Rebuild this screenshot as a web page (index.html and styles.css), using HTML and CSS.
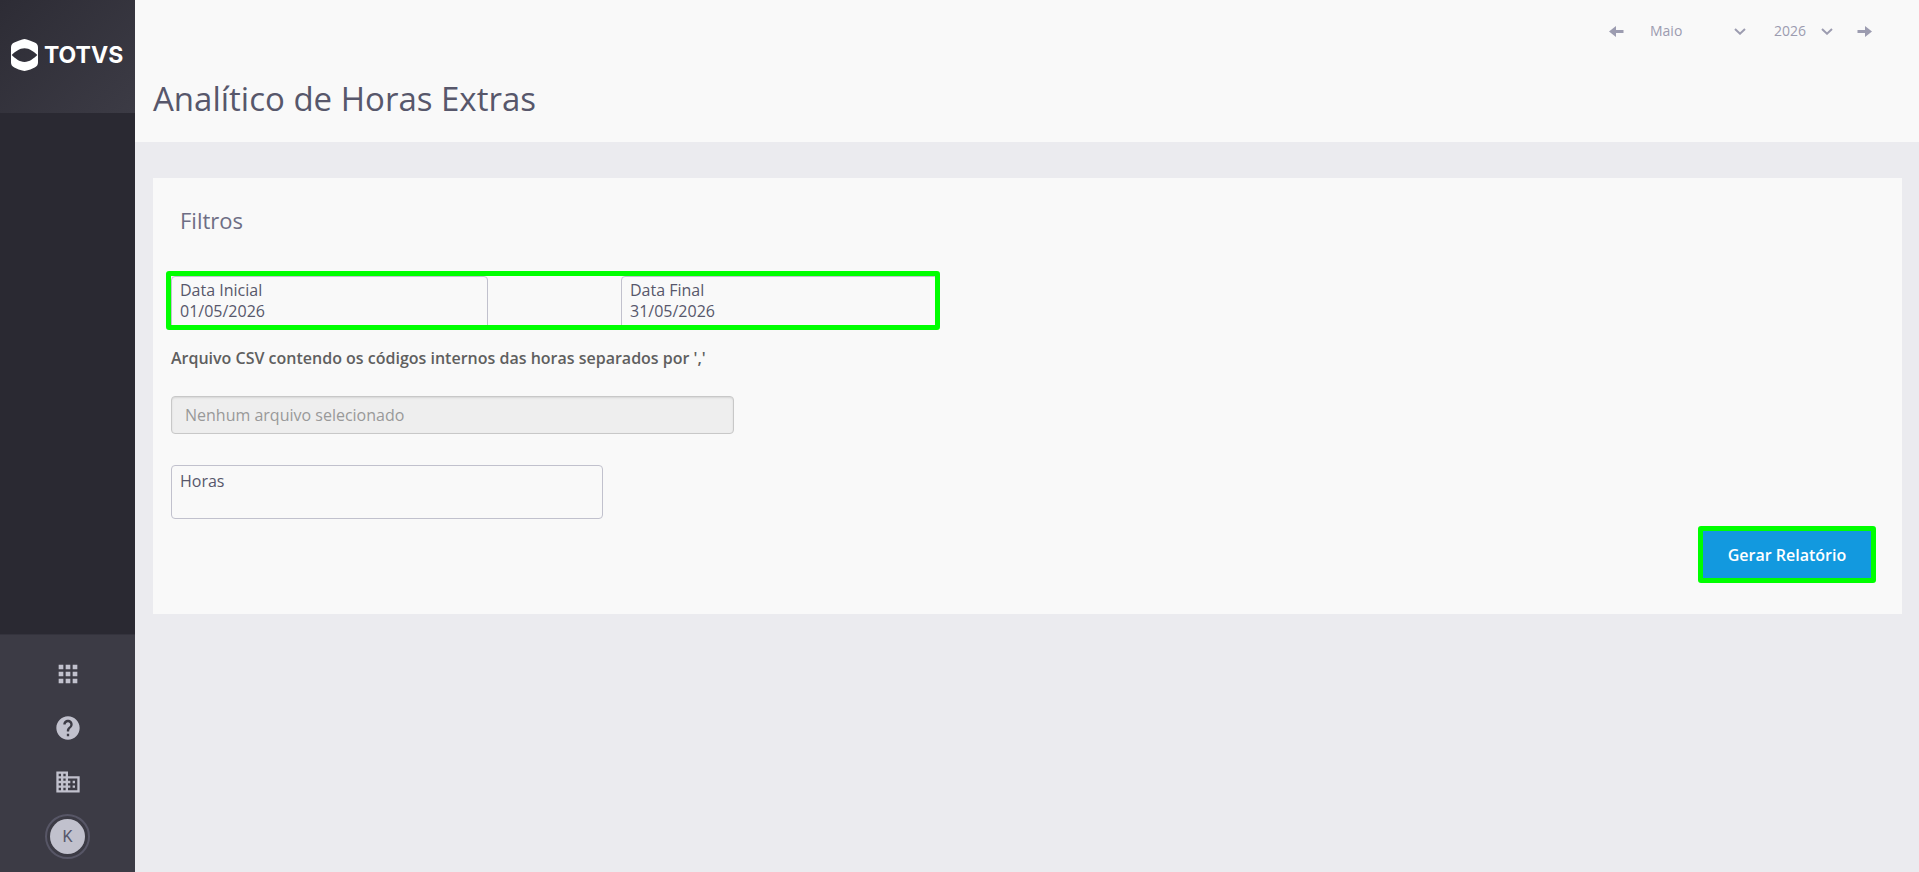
FILE: index.html
```html
<!DOCTYPE html>
<html lang="pt-BR">
<head>
<meta charset="utf-8">
<meta name="viewport" content="width=device-width, initial-scale=1">
<title>Analítico de Horas Extras</title>
<link rel="stylesheet" href="styles.css">
</head>
<body>
<div class="app">
  <aside class="sidebar">
    <a class="brand" href="#">
      <svg class="brand-mark" viewBox="0 0 27 32" aria-hidden="true">
        <path fill-rule="evenodd" d="M0 8.500Q0 5 3.300 3.600Q8 1.200 11.200.4Q13.500-.3 15.800.4Q19 1.200 23.700 3.600Q27 5 27 8.500V23.500Q27 27 23.700 28.400Q19 30.800 15.800 31.600Q13.500 32.300 11.200 31.600Q8 30.800 3.300 28.400Q0 27 0 23.500ZM.7 16C4 19.200 8.500 23 13.500 23S23 19.200 26.300 16C23 12.800 18.500 9.300 13.500 9.300S4 12.800.7 16Z"/>
      </svg>
      <span>TOTVS</span>
    </a>
    <nav class="tools" aria-label="Ferramentas">
      <button class="tool" type="button" aria-label="Aplicativos">
        <svg viewBox="0 0 24 24"><path d="M4 8h4V4H4v4zm6 12h4v-4h-4v4zm-6 0h4v-4H4v4zm0-6h4v-4H4v4zm6 0h4v-4h-4v4zm6-10v4h4V4h-4zm-6 4h4V4h-4v4zm6 6h4v-4h-4v4zm0 6h4v-4h-4v4z"/></svg>
      </button>
      <button class="tool" type="button" aria-label="Ajuda">
        <svg viewBox="0 0 24 24"><path d="M12 2C6.480 2 2 6.480 2 12s4.480 10 10 10 10-4.480 10-10S17.520 2 12 2zm1 17h-2v-2h2v2zm2.070-7.750l-.9.920C13.450 12.900 13 13.500 13 15h-2v-.5c0-1.100.45-2.100 1.170-2.830l1.240-1.260c.37-.36.59-.86.59-1.410 0-1.100-.9-2-2-2s-2 .9-2 2H8c0-2.210 1.790-4 4-4s4 1.790 4 4c0 .88-.36 1.680-.93 2.250z"/></svg>
      </button>
      <button class="tool" type="button" aria-label="Empresa">
        <svg viewBox="0 0 24 24"><path d="M12 7V3H2v18h20V7H12zM6 19H4v-2h2v2zm0-4H4v-2h2v2zm0-4H4V9h2v2zm0-4H4V5h2v2zm4 12H8v-2h2v2zm0-4H8v-2h2v2zm0-4H8V9h2v2zm0-4H8V5h2v2zm10 12h-8v-2h2v-2h-2v-2h2v-2h-2V9h8v10zm-2-8h-2v2h2v-2zm0 4h-2v2h2v-2z"/></svg>
      </button>
      <button class="tool" type="button" aria-label="Perfil de K"><span class="avatar">K</span></button>
    </nav>
  </aside>

  <div class="page">
    <header class="page-header">
      <div class="period">
        <button class="step" type="button" aria-label="Mês anterior">
          <svg viewBox="0 0 15 11"><path d="M0 5.500L7 0V4H14.500V7H7V11Z"/></svg>
        </button>
        <div class="picker picker-month">
          <select aria-label="Mês"><option>Maio</option></select>
          <svg viewBox="0 0 12 7"><path d="M1 1L6 5.700L11 1"/></svg>
        </div>
        <div class="picker picker-year">
          <select aria-label="Ano"><option>2026</option></select>
          <svg viewBox="0 0 12 7"><path d="M1 1L6 5.700L11 1"/></svg>
        </div>
        <button class="step" type="button" aria-label="Próximo mês">
          <svg viewBox="0 0 15 11"><path d="M15 5.500L8 0V4H.5V7H8V11Z"/></svg>
        </button>
      </div>
      <h1>Analítico de Horas Extras</h1>
    </header>

    <main class="content">
      <form class="card">
        <h2>Filtros</h2>
        <div class="dates">
          <div class="field field-date">
            <label for="start">Data Inicial</label>
            <input id="start" type="text" value="01/05/2026">
          </div>
          <div class="field field-date">
            <label for="end">Data Final</label>
            <input id="end" type="text" value="31/05/2026">
          </div>
        </div>
        <label class="file-label" for="file">Arquivo CSV contendo os códigos internos das horas separados por ','</label>
        <input class="file" id="file" type="text" placeholder="Nenhum arquivo selecionado" readonly>
        <div class="field field-hours">
          <label for="hours">Horas</label>
          <input id="hours" type="text">
        </div>
        <button class="submit" type="button">Gerar Relatório</button>
      </form>
    </main>
  </div>
</div>
</body>
</html>
```

FILE: styles.css
```css
* {
  box-sizing: border-box;
}

body {
  margin: 0;
  background: #ebebef;
  color: #57576b;
  font: 16px/24px "Open Sans", "Noto Sans", sans-serif;
}

button,
input,
select {
  margin: 0;
  padding: 0;
  border: 0;
  background: none;
  color: inherit;
  font: inherit;
}

button {
  cursor: pointer;
}

.app {
  display: flex;
  min-height: 100vh;
}

/* Sidebar */
.sidebar {
  display: flex;
  flex: none;
  flex-direction: column;
  width: 135px;
  background: #2a2932;
}

.brand {
  display: flex;
  align-items: center;
  gap: 6px;
  height: 113px;
  padding: 0 0 3px 11px;
  background: linear-gradient(135deg, #2d2c35, #3c3b45);
  color: #fff;
  font: 700 23px/32px Inter, sans-serif;
  text-decoration: none;
}

.brand-mark {
  flex: none;
  width: 27px;
  height: 32px;
  fill: #fff;
}

.tools {
  display: flex;
  flex-direction: column;
  margin-top: auto;
  padding: 12px 0 9px;
  border-top: 1px solid #34333d;
  background: #3c3b45;
}

.tool {
  display: flex;
  align-items: center;
  justify-content: center;
  height: 54px;
  color: #c1c1cd;
}

.tool svg {
  width: 28px;
  height: 28px;
  fill: currentColor;
}

.avatar {
  width: 45px;
  height: 45px;
  padding: 3px;
  border: 2px solid #575666;
  border-radius: 50%;
  background: #c1c1cd content-box;
  background-clip: content-box;
  color: #57576b;
  font: 16px/35px Roboto, sans-serif;
  text-align: center;
}

/* Header */
.page {
  flex: 1;
  min-width: 0;
}

.page-header {
  padding: 19px 18px 20px;
  background: #f9f9f9;
}

.period {
  display: flex;
  align-items: center;
  justify-content: flex-end;
  height: 24px;
  padding-right: 29px;
  color: #9c9cb0;
  font-size: 14px;
}

.step {
  display: flex;
  width: 15px;
}

.step svg {
  width: 15px;
  height: 11px;
  fill: currentColor;
}

.picker {
  display: grid;
  align-items: center;
}

.picker > * {
  grid-area: 1 / 1;
}

.picker select {
  width: 100%;
  appearance: none;
}

.picker svg {
  justify-self: end;
  width: 12px;
  height: 7px;
  fill: none;
  stroke: currentColor;
  stroke-width: 2;
  pointer-events: none;
}

.picker-month {
  width: 96px;
  margin: 0 28px 0 26px;
}

.picker-year {
  width: 59px;
  margin-right: 24px;
}

h1 {
  margin: 32px 0 0;
  font-size: 33px;
  font-weight: 400;
  line-height: 47px;
}

/* Filters */
.content {
  padding: 36px 17px 36px 18px;
}

.card {
  display: flex;
  flex-direction: column;
  align-items: flex-start;
  padding: 26px 26px 31px 18px;
  background: #f9f9f9;
}

h2 {
  margin: 0 0 40px 9px;
  color: #6e6e85;
  font-size: 22px;
  font-weight: 400;
  line-height: 32px;
}

.dates {
  position: relative;
  display: grid;
  grid-template-columns: 317px 317px;
  gap: 133px;
}

.dates::after {
  content: "";
  position: absolute;
  inset: -5px -2px 0 -5px;
  border: 5px solid #0f0;
  border-radius: 3px;
  pointer-events: none;
}

.field {
  display: flex;
  flex-direction: column;
  height: 54px;
  padding: 5px 8px;
  border: 1px solid #c1c1cd;
  border-radius: 4px;
}

.field label,
.field input {
  width: 100%;
  height: 21px;
  line-height: 21px;
}

.field-date {
  padding-top: 3px;
}

.field-hours {
  width: 432px;
  max-width: 100%;
}

.file-label {
  margin: 16px 0 26px;
  color: #5f5f5f;
  font-weight: 600;
}

.file {
  width: 563px;
  max-width: 100%;
  height: 38px;
  margin-bottom: 31px;
  padding: 0 13px;
  border: 1px solid #c8c8c8;
  border-radius: 4px;
  background: #eee;
  box-shadow: inset 0 1px 2px #0000001a;
}

.file::placeholder {
  color: #999;
  opacity: 1;
}

.submit {
  align-self: flex-end;
  min-width: 178px;
  height: 57px;
  margin-top: 7px;
  padding: 0 16px;
  border: 5px solid #0f0;
  border-radius: 3px;
  background: #1299df;
  color: #fff;
  font-weight: 600;
}
```
